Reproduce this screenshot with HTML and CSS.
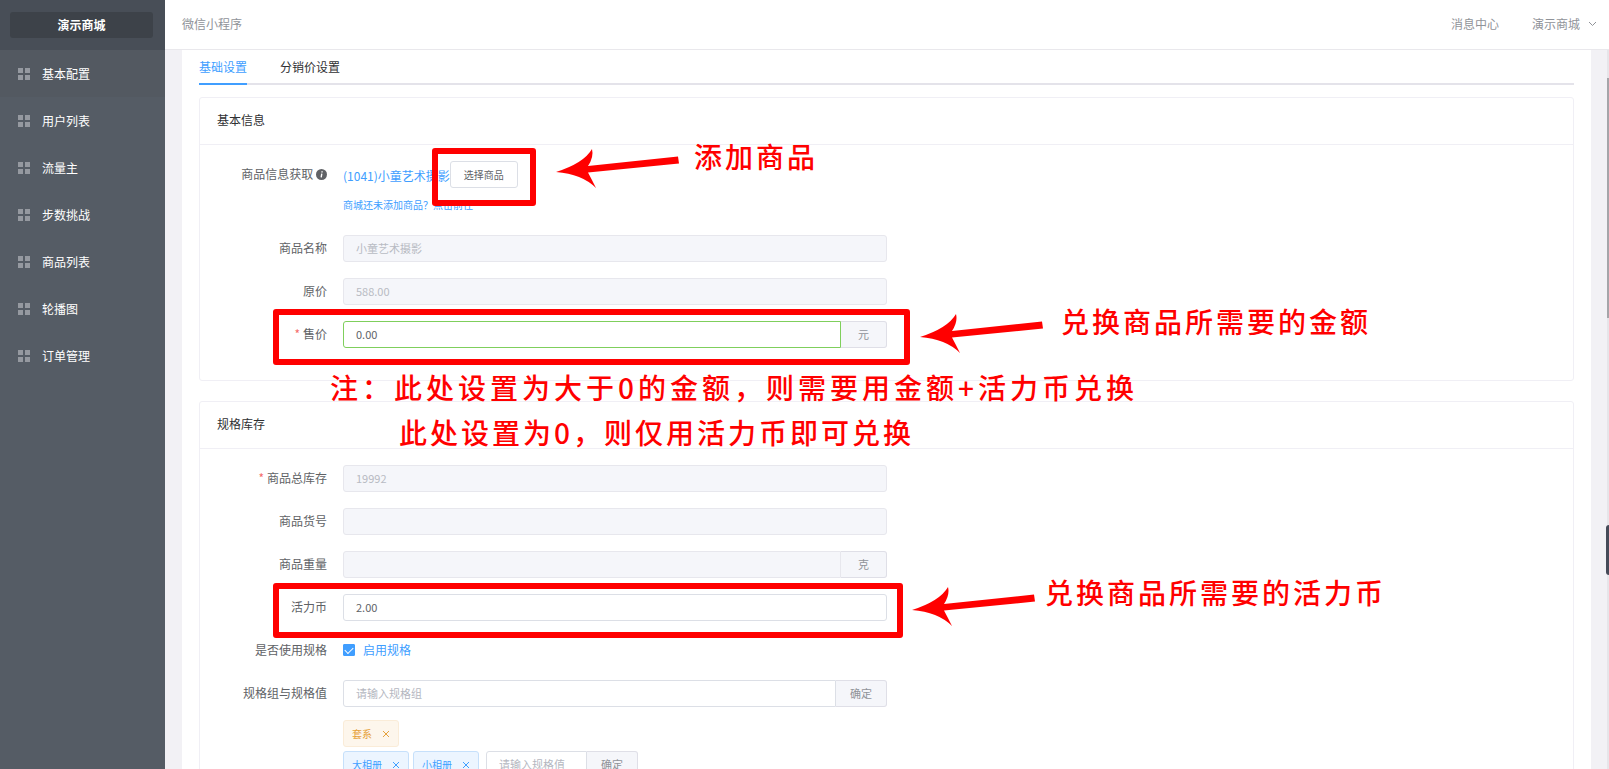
FILE: index.html
```html
<!DOCTYPE html>
<html lang="zh-CN">
<head>
  <meta charset="UTF-8">
  <meta name="viewport" content="width=device-width, initial-scale=1.0">
  <title>演示商城</title>
  <link rel="stylesheet" href="styles.css">
</head>
<body>
  <svg width="0" height="0" class="sprite" aria-hidden="true">
    <symbol id="icon-grid" viewBox="0 0 12 12">
      <path d="M0 0h5v5H0zM7 0h5v5H7zM0 7h5v5H0zM7 7h5v5H7z" fill="currentColor"/>
    </symbol>
    <symbol id="icon-close" viewBox="0 0 8 8">
      <path d="M1 1l6 6M7 1l-6 6" fill="none" stroke="currentColor"/>
    </symbol>
    <symbol id="arrow" viewBox="0 0 123 39">
      <path d="M0 23Q28 14 36 0Q38 8 32 17L122 7.5L123 14.5L32 23.5Q36 31 40 39Q26 25 0 23z" fill="currentColor"/>
    </symbol>
  </svg>

  <aside class="sidebar">
    <div class="sidebar-top">
      <button type="button" class="mall-btn">演示商城</button>
    </div>
    <nav class="menu">
      <a href="#" class="menu-item active"><svg class="menu-icon"><use href="#icon-grid"/></svg>基本配置</a>
      <a href="#" class="menu-item"><svg class="menu-icon"><use href="#icon-grid"/></svg>用户列表</a>
      <a href="#" class="menu-item"><svg class="menu-icon"><use href="#icon-grid"/></svg>流量主</a>
      <a href="#" class="menu-item"><svg class="menu-icon"><use href="#icon-grid"/></svg>步数挑战</a>
      <a href="#" class="menu-item"><svg class="menu-icon"><use href="#icon-grid"/></svg>商品列表</a>
      <a href="#" class="menu-item"><svg class="menu-icon"><use href="#icon-grid"/></svg>轮播图</a>
      <a href="#" class="menu-item"><svg class="menu-icon"><use href="#icon-grid"/></svg>订单管理</a>
    </nav>
  </aside>

  <div class="page">
    <header class="header">
      <span>微信小程序</span>
      <div class="header-right">
        <a href="#">消息中心</a>
        <button type="button" class="user-btn">演示商城
          <svg width="9" height="6" viewBox="0 0 9 6"><path d="M1 1l3.5 3.5L8 1" fill="none" stroke="currentColor"/></svg>
        </button>
      </div>
    </header>

    <main class="content">
      <div class="card">
        <div class="tabs">
          <a href="#" class="tab active">基础设置</a>
          <a href="#" class="tab">分销价设置</a>
        </div>

        <section class="panel">
          <h2 class="panel-title">基本信息</h2>
          <div class="panel-body">
            <div class="row">
              <span class="label">商品信息获取
                <svg class="info" viewBox="0 0 11 11"><circle cx="5.5" cy="5.5" r="5.5" fill="currentColor"/><path d="M5.8 4.6L5.2 8.4M6.1 2.3L6 3.5" stroke="#fff" stroke-width="1.4"/></svg>
              </span>
              <div class="field">
                <div class="pick">
                  <a href="#" class="goods-name">(1041)小童艺术摄影</a>
                  <button type="button" class="btn">选择商品</button>
                </div>
                <a href="#" class="tip">商城还未添加商品？点击前往</a>
              </div>
            </div>
            <div class="row">
              <label class="label" for="name">商品名称</label>
              <div class="field"><input id="name" class="input" type="text" value="小童艺术摄影" disabled></div>
            </div>
            <div class="row">
              <label class="label" for="cost">原价</label>
              <div class="field"><input id="cost" class="input" type="text" value="588.00" disabled></div>
            </div>
            <div class="row">
              <label class="label required" for="price">售价</label>
              <div class="field group">
                <input id="price" class="input valid" type="text" value="0.00">
                <span class="append">元</span>
              </div>
            </div>
          </div>
        </section>

        <section class="panel">
          <h2 class="panel-title">规格库存</h2>
          <div class="panel-body">
            <div class="row">
              <label class="label required" for="stock">商品总库存</label>
              <div class="field"><input id="stock" class="input" type="text" value="19992" disabled></div>
            </div>
            <div class="row">
              <label class="label" for="sn">商品货号</label>
              <div class="field"><input id="sn" class="input" type="text" disabled></div>
            </div>
            <div class="row">
              <label class="label" for="weight">商品重量</label>
              <div class="field group">
                <input id="weight" class="input" type="text" disabled>
                <span class="append">克</span>
              </div>
            </div>
            <div class="row">
              <label class="label" for="coin">活力币</label>
              <div class="field"><input id="coin" class="input" type="text" value="2.00"></div>
            </div>
            <div class="row">
              <span class="label">是否使用规格</span>
              <label class="field check"><input type="checkbox" checked>启用规格</label>
            </div>
            <div class="row">
              <label class="label" for="spec">规格组与规格值</label>
              <div class="field">
                <div class="group">
                  <input id="spec" class="input" type="text" placeholder="请输入规格组">
                  <button type="button" class="append">确定</button>
                </div>
                <div class="tags first">
                  <span class="tag warning">套系<button type="button" aria-label="删除"><svg><use href="#icon-close"/></svg></button></span>
                </div>
                <div class="tags">
                  <span class="tag">大相册<button type="button" aria-label="删除"><svg><use href="#icon-close"/></svg></button></span>
                  <span class="tag">小相册<button type="button" aria-label="删除"><svg><use href="#icon-close"/></svg></button></span>
                  <div class="group small">
                    <input class="input" type="text" placeholder="请输入规格值" aria-label="规格值">
                    <button type="button" class="append">确定</button>
                  </div>
                </div>
              </div>
            </div>
          </div>
        </section>
      </div>
    </main>
  </div>

  <div class="scroll-track"><div class="scroll-thumb"></div></div>
  <div class="side-handle"></div>

  <!-- 操作说明标注 -->
  <div class="guide">
    <div class="mark mark-select"></div>
    <div class="mark mark-price"></div>
    <div class="mark mark-coin"></div>
    <svg class="arrow arrow-select"><use href="#arrow"/></svg>
    <svg class="arrow arrow-price"><use href="#arrow"/></svg>
    <svg class="arrow arrow-coin"><use href="#arrow"/></svg>
    <p class="note note-select">添加商品</p>
    <p class="note note-price">兑换商品所需要的金额</p>
    <p class="note note-more">注：此处设置为大于0的金额，则需要用金额+活力币兑换</p>
    <p class="note note-zero">此处设置为0，则仅用活力币即可兑换</p>
    <p class="note note-coin">兑换商品所需要的活力币</p>
  </div>
</body>
</html>
```
FILE: styles.css
```css
* {
  margin: 0;
  padding: 0;
  box-sizing: border-box;
}

body {
  display: flex;
  height: 100vh;
  overflow: hidden;
  position: relative;
  font-family: "Noto Sans CJK SC", "Liberation Sans", sans-serif;
  font-size: 12px;
  line-height: 18px;
  color: #303133;
  background: #f2f1f5;
}

a {
  color: inherit;
  text-decoration: none;
}

button,
input {
  font: inherit;
  color: inherit;
}

button {
  border: none;
  background: none;
  cursor: pointer;
}

.sprite {
  position: absolute;
}

/* 侧边栏 */
.sidebar {
  flex: none;
  width: 165px;
  background: #555c65;
  color: #fff;
}

.sidebar-top {
  height: 50px;
  padding: 12px 12px 12px 10px;
  background: #484e57;
}

.mall-btn {
  width: 100%;
  height: 26px;
  border-radius: 3px;
  background: #3d4249;
  font-weight: 700;
}

.menu-item {
  display: flex;
  align-items: center;
  gap: 12px;
  height: 47px;
  padding-left: 18px;
}

.menu-item.active {
  background: #535961;
}

.menu-icon {
  width: 12px;
  height: 12px;
  color: #9599a0;
}

/* 顶部 */
.page {
  flex: 1;
  min-width: 0;
  display: flex;
  flex-direction: column;
}

.header {
  flex: none;
  display: flex;
  align-items: center;
  justify-content: space-between;
  height: 50px;
  padding: 0 12px 2px 17px;
  border-bottom: 1px solid #e9e8ec;
  background: #fff;
  color: #909399;
}

.header-right {
  display: flex;
  gap: 33px;
}

.user-btn {
  display: flex;
  align-items: center;
  gap: 8px;
}

/* 内容区 */
.content {
  flex: 1;
  min-height: 0;
  overflow: hidden;
  padding: 0 18px 0 17px;
}

.card {
  padding: 0 17px;
  background: #fff;
}

.tabs {
  display: flex;
  gap: 33px;
  height: 35px;
  margin-bottom: 12px;
  border-bottom: 2px solid #e4e3ea;
}

.tab {
  height: 35px;
  padding-top: 8px;
}

.tab.active {
  border-bottom: 2px solid #409eff;
  color: #409eff;
}

.panel {
  margin-bottom: 20px;
  border: 1px solid #f0eff5;
  border-radius: 3px;
}

.panel-title {
  height: 47px;
  padding: 13px 17px;
  border-bottom: 1px solid #f0eff5;
  font-size: 12px;
  font-weight: 400;
}

.panel-body {
  padding: 16px 17px 16px;
}

.row {
  display: flex;
  margin-bottom: 16px;
}

.label {
  flex: none;
  width: 126px;
  padding-right: 16px;
  line-height: 26px;
  text-align: right;
  color: #606266;
}

.required::before {
  content: "*";
  margin-right: 3px;
  color: #f56c6c;
}

.info {
  width: 11px;
  height: 11px;
  vertical-align: -1px;
}

.field {
  flex: 1;
  max-width: 544px;
}

.input {
  display: block;
  width: 100%;
  height: 27px;
  padding: 0 12px 2px;
  border: 1px solid #dcdfe6;
  border-radius: 3px;
  background: #fff;
  font-size: 11px;
  color: #606266;
}

.input::placeholder {
  color: #b4b7bf;
}

.input:disabled {
  border-color: #e7e7ed;
  background: #f5f6fa;
  color: #b8bbc3;
}

.input.valid {
  border-color: #7fcf5c;
}

.group {
  display: flex;
}

.group .input {
  flex: 1;
  min-width: 0;
  border-radius: 3px 0 0 3px;
}

.append {
  height: 27px;
  padding: 0 17px;
  border: 1px solid #dfdfe7;
  border-left: none;
  border-radius: 0 3px 3px 0;
  background: #f5f6fa;
  font-size: 11px;
  line-height: 25px;
  color: #909399;
}

button.append {
  padding: 0 14px;
}

.pick {
  display: flex;
  align-items: center;
  height: 27px;
}

.goods-name {
  padding-top: 3px;
  color: #409eff;
}

.btn {
  height: 27px;
  padding: 0 13px;
  border: 1px solid #dcdfe6;
  border-radius: 3px;
  background: #fff;
  font-size: 10px;
  color: #606266;
}

.tip {
  display: block;
  height: 31px;
  padding-top: 8px;
  font-size: 10px;
  color: #409eff;
}

.check {
  display: flex;
  align-items: center;
  gap: 8px;
  height: 27px;
  padding-bottom: 2px;
  color: #409eff;
}

.check input {
  appearance: none;
  display: grid;
  place-items: center;
  width: 12px;
  height: 12px;
  border: 1px solid #dcdfe6;
  border-radius: 1px;
}

.check input:checked {
  border-color: #409eff;
  background: #409eff;
}

.check input:checked::before {
  content: "";
  width: 7px;
  height: 4px;
  border-left: 1px solid #fff;
  border-bottom: 1px solid #fff;
  transform: rotate(-45deg);
}

.tags {
  display: flex;
  gap: 4px;
  margin-top: 4px;
}

.tags.first {
  margin-top: 13px;
}

.tag {
  display: flex;
  align-items: center;
  gap: 10px;
  height: 27px;
  padding: 0 8px;
  border: 1px solid #c6e0fb;
  border-radius: 3px;
  background: #ecf5ff;
  font-size: 10px;
  color: #409eff;
}

.tag.warning {
  border-color: #faecd8;
  background: #fdf6ec;
  color: #e6a23c;
}

.tag svg {
  display: block;
  width: 8px;
  height: 8px;
}

.small {
  width: 152px;
  margin-left: 3px;
}

/* 滚动条与侧边把手 */
.scroll-track {
  position: absolute;
  top: 50px;
  right: 0;
  bottom: 0;
  width: 2px;
  padding-top: 28px;
  background: #e6e5e9;
}

.scroll-thumb {
  height: 240px;
  background: #a5a5a9;
}

.side-handle {
  position: absolute;
  top: 525px;
  right: 0;
  width: 3px;
  height: 50px;
  border-radius: 3px 0 0 3px;
  background: #454a58;
}

/* 标注 */
.guide {
  position: absolute;
  top: 0;
  left: 0;
  color: #f00;
  pointer-events: none;
}

.mark {
  position: absolute;
  border: 6px solid #f00;
  border-radius: 3px;
}

.mark-select {
  top: 148px;
  left: 432px;
  width: 104px;
  height: 58px;
}

.mark-price {
  top: 309px;
  left: 273px;
  width: 637px;
  height: 56px;
}

.mark-coin {
  top: 583px;
  left: 273px;
  width: 630px;
  height: 55px;
}

.arrow {
  position: absolute;
  width: 123px;
  height: 39px;
}

.arrow-select {
  top: 149px;
  left: 556px;
}

.arrow-price {
  top: 314px;
  left: 920px;
}

.arrow-coin {
  top: 587px;
  left: 912px;
}

.note {
  position: absolute;
  font-size: 28px;
  font-weight: 500;
  line-height: 36px;
  letter-spacing: 3px;
  white-space: nowrap;
}

.note-select {
  top: 138px;
  left: 694px;
}

.note-price {
  top: 303px;
  left: 1061px;
}

.note-more {
  top: 369px;
  left: 330px;
  letter-spacing: 4px;
}

.note-zero {
  top: 414px;
  left: 399px;
}

.note-coin {
  top: 574px;
  left: 1045px;
}
```
